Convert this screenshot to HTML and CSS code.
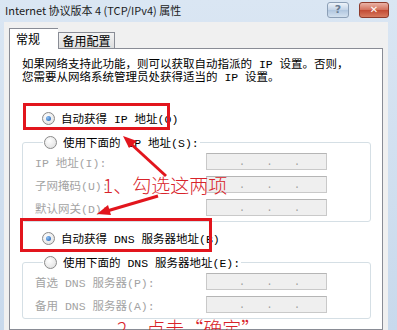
FILE: index.html
```html
<!DOCTYPE html>
<html>

<head>
    <title>Internet 协议版本 4 (TCP/IPv4) 属性</title>
    <link rel="stylesheet" href="styles.css">
</head>

<body>
    <div class="titlebar">
        <span class="title">Internet 协议版本 4 (TCP/IPv4) 属性</span>
        <span class="cap-btn help">?</span>
        <span class="cap-btn close">&#x2715;</span>
    </div>

    <div class="window-body">
        <div class="tabs">
            <span class="tab active">常规</span>
            <span class="tab">备用配置</span>
        </div>

        <div class="panel">
            <p class="intro">如果网络支持此功能，则可以获取自动指派的 IP 设置。否则，<br>您需要从网络系统管理员处获得适当的 IP 设置。</p>

            <div class="choice first">
                <span class="radio checked"></span>
                <span>自动获得 IP 地址(O)</span>
            </div>

            <fieldset class="group">
                <legend class="choice">
                    <span class="radio"></span>
                    <span>使用下面的 IP 地址(S):</span>
                </legend>
                <div class="row">
                    <label>IP 地址(I):</label>
                    <div class="ip"><span>.</span><span>.</span><span>.</span></div>
                </div>
                <div class="row">
                    <label>子网掩码(U):</label>
                    <div class="ip"><span>.</span><span>.</span><span>.</span></div>
                </div>
                <div class="row">
                    <label>默认网关(D):</label>
                    <div class="ip"><span>.</span><span>.</span><span>.</span></div>
                </div>
            </fieldset>

            <div class="choice">
                <span class="radio checked"></span>
                <span>自动获得 DNS 服务器地址(B)</span>
            </div>

            <fieldset class="group">
                <legend class="choice">
                    <span class="radio"></span>
                    <span>使用下面的 DNS 服务器地址(E):</span>
                </legend>
                <div class="row">
                    <label>首选 DNS 服务器(P):</label>
                    <div class="ip"><span>.</span><span>.</span><span>.</span></div>
                </div>
                <div class="row">
                    <label>备用 DNS 服务器(A):</label>
                    <div class="ip"><span>.</span><span>.</span><span>.</span></div>
                </div>
            </fieldset>
        </div>
    </div>

    <!-- annotations drawn over the screenshot -->
    <div class="mark mark-ip"></div>
    <div class="mark mark-dns"></div>
    <svg class="arrows" width="397" height="330" viewBox="0 0 397 330">
        <line x1="166" y1="176" x2="130" y2="143" />
        <polygon points="123,136 137,141 129,148" />
        <line x1="158" y1="196" x2="107" y2="211" />
        <polygon points="97,214 108,205 111,215" />
    </svg>
    <div class="note note-1">1、勾选这两项</div>
    <div class="note note-2">2、点击“确定”</div>
</body>

</html>
```

FILE: styles.css
```css
body {
    margin: 0;
    width: 397px;
    height: 330px;
    overflow: hidden;
    position: relative;
    background: linear-gradient(#dae6f3, #c8d9ec);
    font-family: "Liberation Mono", "Noto Sans CJK SC", monospace;
    font-size: 11.5px;
    color: #000;
}

/* title bar */

.titlebar {
    height: 22px;
    display: flex;
    align-items: center;
    padding: 0 8px 0 5px;
}

.title {
    flex: 1;
    font-family: "Noto Sans CJK SC", sans-serif;
    font-size: 11px;
    color: #1b1b1b;
    margin-top: -2px;
}

.cap-btn {
    height: 14px;
    border-radius: 3px;
    display: flex;
    align-items: center;
    justify-content: center;
    font-family: "DejaVu Sans", sans-serif;
    font-weight: bold;
    margin-top: -3px;
}

.help {
    width: 20px;
    border: 1px solid #8c9fb6;
    background: linear-gradient(#eef3f9, #c2d3e7 50%, #b0c6df 51%, #d3e1ef);
    color: #6a7c92;
    font-size: 11px;
}

.close {
    width: 28px;
    margin-left: 10px;
    border: 1px solid #8e3b2c;
    background: linear-gradient(#eab3a6, #d3705c 50%, #c24a33 51%, #d77a5f);
    color: #fff;
    font-size: 10px;
}

/* dialog */

.window-body {
    margin: 0 9px 0 4px;
    height: 302px;
    padding: 6px 5px 0 5px;
    background: #f0f0f0;
}

.tabs {
    display: flex;
    align-items: flex-end;
    height: 20px;
}

.tab {
    font-family: "Noto Sans CJK SC", sans-serif;
    font-size: 12px;
    height: 15px;
    width: 55px;
    line-height: 15px;
    text-align: center;
    border: 1px solid #898c95;
    border-bottom: none;
    background: linear-gradient(#f3f3f3, #dedede);
}

.tab.active {
    width: 42px;
    height: 20px;
    line-height: 20px;
    text-align: left;
    padding-left: 6px;
    background: #fff;
    border-right: none;
    position: relative;
    z-index: 1;
    margin-bottom: -1px;
}

.panel {
    height: 271px;
    overflow: hidden;
    border: 1px solid #898c95;
    background: #fff;
    padding: 9px 11px 0 12px;
}

.intro {
    margin: 0;
    line-height: 13px;
}

.choice {
    display: flex;
    align-items: center;
    height: 16px;
    gap: 6px;
    margin: 8px 0 8px 20px;
}

.choice.first {
    margin-top: 26px;
}

.radio {
    width: 11px;
    height: 11px;
    border: 1px solid #8a8a8a;
    border-radius: 50%;
    background: radial-gradient(circle at 40% 35%, #fff, #dcdcdc);
    display: flex;
    align-items: center;
    justify-content: center;
}

.radio.checked::after {
    content: "";
    width: 5px;
    height: 5px;
    border-radius: 50%;
    background: radial-gradient(circle at 35% 35%, #8ec1f3, #1b5bb0);
}

.group {
    margin: 0;
    padding: 3px 0 5px 12px;
    border: 1px solid #d5dfe5;
    border-radius: 3px;
}

.group legend.choice {
    margin: 0 0 0 8px;
    padding: 0 1px;
    gap: 6px;
}

.row {
    display: flex;
    align-items: center;
    height: 17px;
    margin-bottom: 6px;
}

.row:last-child {
    margin-bottom: 0;
}

.row label {
    width: 171px;
    color: #a3a3a3;
}

.ip {
    box-sizing: border-box;
    width: 121px;
    height: 17px;
    border: 1px solid #c9c9c9;
    border-top-color: #b5b5b5;
    background: #efefef;
    display: flex;
    justify-content: space-between;
    padding: 0 26px 0 32px;
    color: #9c9c9c;
    font-size: 10px;
    line-height: 17px;
}

/* annotations */

.mark {
    position: absolute;
    border: 3px solid #e2151d;
}

.mark-ip {
    left: 23px;
    top: 103px;
    width: 141px;
    height: 21px;
}

.mark-dns {
    left: 20px;
    top: 218px;
    width: 186px;
    height: 28px;
}

.arrows {
    position: absolute;
    left: 0;
    top: 0;
}

.arrows line {
    stroke: #e2151d;
    stroke-width: 3;
}

.arrows polygon {
    fill: #e2151d;
}

.note {
    position: absolute;
    font-family: "Noto Sans CJK SC", sans-serif;
    font-size: 19px;
    line-height: 20px;
    color: #d8232a;
    font-weight: 300;
}

.note-1 {
    left: 103px;
    top: 175px;
}

.note-2 {
    left: 117px;
    top: 318px;
}
```
